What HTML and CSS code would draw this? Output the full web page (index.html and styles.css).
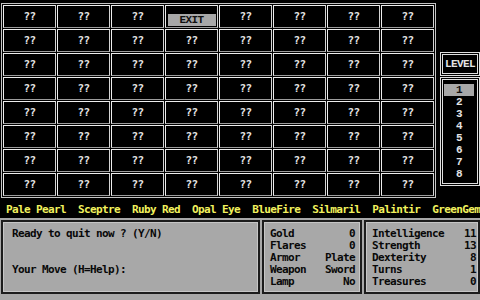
FILE: index.html
```html
<!DOCTYPE html>
<html>
<head>
  <meta charset="utf-8" />
  <title>Cave Board</title>
  <link rel="stylesheet" href="styles.css">
</head>
<body>
  <div class="top">
    <div class="board">
      <div class="cell">??</div><div class="cell">??</div><div class="cell">??</div><div class="cell exit"><span>EXIT</span></div><div class="cell">??</div><div class="cell">??</div><div class="cell">??</div><div class="cell">??</div>
      <div class="cell">??</div><div class="cell">??</div><div class="cell">??</div><div class="cell">??</div><div class="cell">??</div><div class="cell">??</div><div class="cell">??</div><div class="cell">??</div>
      <div class="cell">??</div><div class="cell">??</div><div class="cell">??</div><div class="cell">??</div><div class="cell">??</div><div class="cell">??</div><div class="cell">??</div><div class="cell">??</div>
      <div class="cell">??</div><div class="cell">??</div><div class="cell">??</div><div class="cell">??</div><div class="cell">??</div><div class="cell">??</div><div class="cell">??</div><div class="cell">??</div>
      <div class="cell">??</div><div class="cell">??</div><div class="cell">??</div><div class="cell">??</div><div class="cell">??</div><div class="cell">??</div><div class="cell">??</div><div class="cell">??</div>
      <div class="cell">??</div><div class="cell">??</div><div class="cell">??</div><div class="cell">??</div><div class="cell">??</div><div class="cell">??</div><div class="cell">??</div><div class="cell">??</div>
      <div class="cell">??</div><div class="cell">??</div><div class="cell">??</div><div class="cell">??</div><div class="cell">??</div><div class="cell">??</div><div class="cell">??</div><div class="cell">??</div>
      <div class="cell">??</div><div class="cell">??</div><div class="cell">??</div><div class="cell">??</div><div class="cell">??</div><div class="cell">??</div><div class="cell">??</div><div class="cell">??</div>
    </div>
    <div class="level">
      <div class="level-head">LEVEL</div>
      <ul class="level-list">
        <li class="sel">1</li>
        <li>2</li>
        <li>3</li>
        <li>4</li>
        <li>5</li>
        <li>6</li>
        <li>7</li>
        <li>8</li>
      </ul>
    </div>
  </div>

  <div class="treasures">
    <span>Pale Pearl</span>
    <span>Sceptre</span>
    <span>Ruby Red</span>
    <span>Opal Eye</span>
    <span>BlueFire</span>
    <span>Silmaril</span>
    <span>Palintir</span>
    <span>GreenGem</span>
  </div>

  <div class="status">
    <div class="box msg">
      <p>Ready to quit now ? (Y/N)</p>
      <p class="prompt">Your Move (H=Help):</p>
    </div>
    <div class="box stats inv">
      <span>Gold</span><span class="val">0</span>
      <span>Flares</span><span class="val">0</span>
      <span>Armor</span><span class="val">Plate</span>
      <span>Weapon</span><span class="val">Sword</span>
      <span>Lamp</span><span class="val">No</span>
    </div>
    <div class="box stats attr">
      <span>Intelligence</span><span class="val">11</span>
      <span>Strength</span><span class="val">13</span>
      <span>Dexterity</span><span class="val">8</span>
      <span>Turns</span><span class="val">1</span>
      <span>Treasures</span><span class="val">0</span>
    </div>
  </div>
</body>
</html>
```

FILE: styles.css
```css
:root {
  --screen: #000000;
  --fg: #e4e4e4;
  --panel: #a8a8a8;
  --edge: #1c1c1c;
  --gold: #f2f25e;
}
body {
  margin: 0;
  width: 480px;
  height: 300px;
  overflow: hidden;
  background: var(--screen);
  color: var(--fg);
  font-family: "DejaVu Sans Mono", monospace;
  font-weight: bold;
  font-size: 11px;
  letter-spacing: -0.62px;
  line-height: 12px;
}
p, ul {
  margin: 0;
  padding: 0;
}

/* board */
.top {
  display: flex;
  height: 200px;
}
.board {
  align-self: flex-start;
  margin: 3px 0 0 1px;
  border: 1px solid #c4c4c4;
  padding: 1px;
  display: grid;
  grid-template-columns: repeat(8, 53px);
  grid-auto-rows: 23px;
  gap: 1px;
}
.cell {
  border: 1px solid;
  border-color: #ececec #d4d4d4 #9c9c9c #ececec;
  display: flex;
  align-items: center;
  justify-content: center;
}
.cell.exit {
  align-items: flex-end;
  padding-bottom: 1px;
}
.cell.exit span {
  width: 48px;
  height: 12px;
  background: var(--panel);
  color: #101010;
  font-family: "Liberation Mono", monospace;
  text-align: center;
}

/* level chooser */
.level {
  margin: 52px 0 0 4px;
  width: 40px;
  display: flex;
  flex-direction: column;
  font-family: "Liberation Mono", monospace;
}
.level-head {
  height: 18px;
  border: 3px double #e0e0e0;
  display: flex;
  align-items: center;
  justify-content: center;
}
.level-list {
  list-style: none;
  margin-top: 1px;
  border: 3px double #e0e0e0;
  padding: 4px 0 3px;
}
.level-list li {
  height: 12px;
  margin: 0 3px 0 1px;
  text-align: center;
}
.level-list li.sel {
  background: var(--panel);
  color: #101010;
}

/* treasure names */
.treasures {
  margin-top: 4px;
  padding-left: 6px;
  display: flex;
  gap: 12px;
  color: var(--gold);
  white-space: pre;
}

/* status panels */
.status {
  margin-top: 2px;
  height: 82px;
  box-sizing: border-box;
  padding: 2px 0 6px 1px;
  background: var(--panel);
  color: #080808;
  display: flex;
  gap: 2px;
}
.box {
  border: 2px solid var(--edge);
  box-shadow: inset 0 0 0 1px #c6c6c6;
  box-sizing: border-box;
  height: 74px;
}
.msg {
  width: 259px;
  padding: 6px 0 0 9px;
}
.msg .prompt {
  margin-top: 24px;
}
.stats {
  display: grid;
  grid-template-columns: 1fr auto;
  grid-auto-rows: 12px;
  padding-top: 6px;
}
.inv {
  width: 100px;
  padding-left: 6px;
  padding-right: 5px;
}
.attr {
  width: 116px;
  padding-left: 6px;
  padding-right: 2px;
}
.val {
  text-align: right;
}
```
